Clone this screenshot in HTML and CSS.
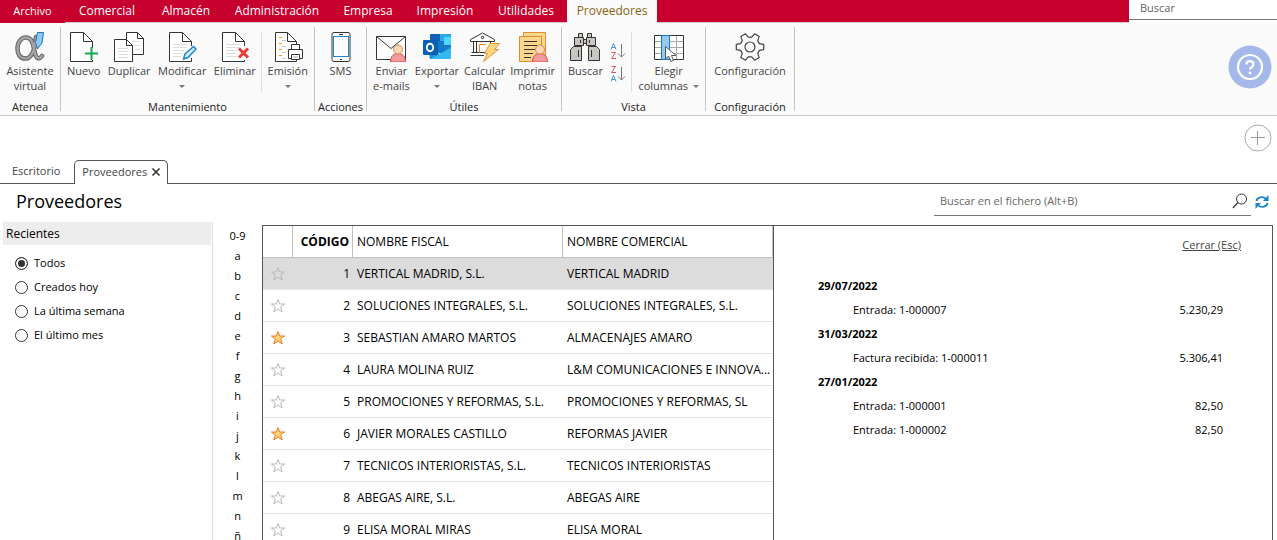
FILE: index.html
```html
<!DOCTYPE html>
<html lang="es">
<head>
<meta charset="utf-8">
<title>Proveedores</title>
<link rel="stylesheet" href="styles.css">
</head>
<body>
<svg class="defs" aria-hidden="true">
  <defs>
    <symbol id="star" viewBox="0 0 16 16"><path d="M8 1.600 9.700 6H14.600L10.700 9 12.200 14 8 11 3.800 14 5.300 9 1.400 6H6.300Z"/></symbol>
    <symbol id="person" viewBox="0 0 16 18"><path d="M.5 18C.5 12 4 9.500 8 9.500S15.500 12 15.500 18Z" fill="#f29b9d" stroke="#e0474c"/><circle cx="8" cy="5.500" r="4.500" fill="#fad7b5" stroke="#d08a50"/></symbol>
  </defs>
</svg>

<header class="menubar">
  <nav class="menu">
    <a class="menu-item file" href="#">Archivo</a>
    <a class="menu-item" href="#">Comercial</a>
    <a class="menu-item" href="#">Almacén</a>
    <a class="menu-item" href="#">Administración</a>
    <a class="menu-item" href="#">Empresa</a>
    <a class="menu-item" href="#">Impresión</a>
    <a class="menu-item" href="#">Utilidades</a>
    <a class="menu-item current" href="#">Proveedores</a>
  </nav>
  <input class="menu-search" type="text" placeholder="Buscar" aria-label="Buscar">
</header>

<section class="ribbon">
  <div class="group">
    <div class="tools single">
      <button class="tool"><svg width="30" height="30" viewBox="0 0 30 30"><g fill="none" stroke-linecap="round"><path d="M21 5C20 16 17 26.500 10.500 26.500 5 26.500 2.500 22 2.500 16.500 2.500 10 6 5.500 11 5.500 18 5.500 18 14 20 21 21 26 24 28 27 24" stroke="#666" stroke-width="4.500"/><path d="M21 5C20 16 17 26.500 10.500 26.500 5 26.500 2.500 22 2.500 16.500 2.500 10 6 5.500 11 5.500 18 5.500 18 14 20 21 21 26 24 28 27 24" stroke="#a3a3a3" stroke-width="2.500"/></g><path d="M22.500.5H28.500L27 11 22.500 17 20.500 10.500Z" fill="#8fc9f2" stroke="#1f74ba"/></svg><span>Asistente<br>virtual</span></button>
    </div>
    <h2 class="group-name">Atenea</h2>
  </div>

  <div class="group">
    <div class="tools">
      <button class="tool"><svg width="30" height="30" viewBox="0 0 30 30"><path d="M23.500 16V9.500L14.500.5H1.500V29.500H23.500V28M14.500.5V9.500H23.500" fill="#fff" stroke="#333"/><path d="M22.500 15V28M16 21.500H29" stroke="#12a650" stroke-width="2"/></svg><span>Nuevo</span></button>
      <button class="tool"><svg width="30" height="30" viewBox="0 0 30 30"><path d="M12.500.5H23.500L29.500 6.500V22.500H12.500Z" fill="#fff" stroke="#333"/><path d="M23.500.5V6.500H29.500" fill="none" stroke="#333"/><path d="M18 9.500H26M20 13.500H26M20 17.500H26" stroke="#ddd"/><path d="M.5 7.500H12.500L18.500 13.500V29.500H.5Z" fill="#fff" stroke="#333"/><path d="M12.500 7.500V13.500H18.500" fill="none" stroke="#333"/><path d="M4 16.500H14M4 19.500H14M4 22.500H14M4 25.500H14" stroke="#ddd"/></svg><span>Duplicar</span></button>
      <button class="tool"><svg width="30" height="30" viewBox="0 0 30 30"><path d="M24.500 14V9.500L15.500.5H2.500V29.500H24.500V26M15.500.5V9.500H24.500" fill="#fff" stroke="#333"/><path d="M6 12.500H20M6 15.500H20M6 18.500H17M6 21.500H15M6 24.500H14" stroke="#ddd"/><path d="M16.500 27 18 22 26.500 14.500 29 17 21 25.500Z" fill="#d3ebfa" stroke="#1e86c8" stroke-width="1.500"/></svg><span>Modificar</span><i class="caret"></i></button>
      <button class="tool"><svg width="30" height="30" viewBox="0 0 30 30"><path d="M24.500 14V9.500L15.500.5H2.500V29.500H24.500V28M15.500.5V9.500H24.500" fill="#fff" stroke="#333"/><path d="M6 12.500H20M6 15.500H20M6 18.500H17M6 21.500H17M6 24.500H17" stroke="#ddd"/><path d="M19 16.500 28 25.500M28 16.500 19 25.500" stroke="#ef3b36" stroke-width="3"/></svg><span>Eliminar</span></button>
      <span class="divider"></span>
      <button class="tool"><svg width="30" height="30" viewBox="0 0 30 30"><path d="M23.500 12V9.500L14.500.5H2.500V29.500H23.500V28M14.500.5V9.500H23.500" fill="#fff" stroke="#333"/><path d="M6 5.500H9M6 11.500H9M6 17.500H9M6 23.500H9" stroke="#f39a12"/><path d="M9 8.500H13M9 14.500H13M9 20.500H13M9 26.500H13" stroke="#ccc"/><path d="M15.500 17.500H29.500V26.500H26.500M18.500 26.500H15.500V17.500M18.500 17.500V12.500H26.500V17.500M18.500 22.500H26.500V27.500H18.500Z" fill="#fff" stroke="#333"/><path d="M20 25H25" stroke="#aaa"/></svg><span>Emisión</span><i class="caret"></i></button>
    </div>
    <h2 class="group-name">Mantenimiento</h2>
  </div>

  <div class="group">
    <div class="tools single">
      <button class="tool"><svg width="20" height="30" viewBox="0 0 20 30"><rect x="1" y=".5" width="18" height="29" rx="2" fill="#fff" stroke="#333"/><rect x="2.500" y="4.500" width="15" height="20" fill="#fff" stroke="#1e86c8"/><path d="M8 2.500H12M9 27.500H11" stroke="#333"/></svg><span>SMS</span></button>
    </div>
    <h2 class="group-name">Acciones</h2>
  </div>

  <div class="group">
    <div class="tools">
      <button class="tool"><svg width="30" height="30" viewBox="0 0 30 30"><path d="M.5 4.500H29.500V27.500H.5ZL15 16.500 29.500 4.500" fill="#fff" stroke="#333"/><use href="#person" x="14" y="12" width="16" height="18"/></svg><span>Enviar<br>e-mails</span></button>
      <button class="tool"><svg width="30" height="30" viewBox="0 0 30 30"><path d="M8 3H29V21H8Z" fill="#1579ca"/><path d="M8 2H18V9H8Z" fill="#0f64b4"/><path d="M18 2H29V9H18Z" fill="#29a8ea"/><path d="M22 5H29V13H22Z" fill="#50d9ff"/><path d="M6 17 18 22 29 14V27H8Z" fill="#1690df"/><path d="M8 27 29 16V27Z" fill="#35b8f1"/><rect x="1" y="8" width="15" height="15" rx="1" fill="#0a5fb5"/><ellipse cx="8" cy="15.500" rx="3.200" ry="3.700" fill="none" stroke="#fff" stroke-width="1.900"/></svg><span>Exportar</span><i class="caret"></i></button>
      <button class="tool"><svg width="30" height="30" viewBox="0 0 30 30"><path d="M.5 7.500 12.500 1 24.500 7.500V9.500H.5ZM3.500 9.500V20.500M6.500 9.500V20.500M20.500 9.500V17M1.500 20.500H15M.5 23.500H14" fill="#fff" stroke="#333"/><path d="M9.500 21V12.500H16" fill="none" stroke="#e98424"/><circle cx="12.500" cy="5.500" r="1.200" fill="none" stroke="#333"/><path d="M20 11.500H29.500L24.500 17.500H28.500L13.500 29.500 17.500 21.500H14.500Z" fill="#ffd77f" stroke="#df9440"/></svg><span>Calcular<br>IBAN</span></button>
      <button class="tool"><svg width="30" height="30" viewBox="0 0 30 30"><path d="M5.500 4V.5H27.500V26H23" fill="#fbd78b" stroke="#dd8d32"/><path d="M1.500 4.500H23.500V29.500H1.500Z" fill="#fbd78b" stroke="#dd8d32"/><path d="M6 9.500H19M6 13.500H19M6 17.500H17M6 21.500H15M6 25.500H13" stroke="#333"/><use href="#person" x="14" y="12" width="16" height="18"/></svg><span>Imprimir<br>notas</span></button>
    </div>
    <h2 class="group-name">Útiles</h2>
  </div>

  <div class="group">
    <div class="tools">
      <button class="tool"><svg width="30" height="30" viewBox="0 0 30 30"><g fill="#c9c5c1" stroke="#333"><path d="M12 7.500H18V11.500H12ZM8.500 1.500H12.500V5.500H8.500ZM17.500 1.500H21.500V5.500H17.500Z"/><path d="M4.500 5.500H13.500V13.500H4.500ZM16.500 5.500H25.500V13.500H16.500ZM3.500 14.500H11.500V28.500H.5V17.500ZM18.500 14.500H26.500L29.500 17.500V28.500H18.500Z"/></g><path d="M10.500 8V11M19.500 8V11M8.500 18V25M21.500 18V25" stroke="#333"/></svg><span>Buscar</span></button>
      <div class="sorts">
        <button class="sort" aria-label="Orden ascendente"><svg width="16" height="16" viewBox="0 0 16 16" fill="none"><path d="M1 6.500 3.500.5 6 6.500M2 4.500H5" stroke="#3a96d2"/><path d="M1.500 9.500H5.500L1.500 15.500H6" stroke="#e0505a"/><path d="M11.500 1V14M8 10.500 11.500 14 15 10.500" stroke="#777"/></svg></button>
        <button class="sort" aria-label="Orden descendente"><svg width="16" height="16" viewBox="0 0 16 16" fill="none"><path d="M1.500.5H5.500L1.500 6.500H6" stroke="#e0505a"/><path d="M1 15.500 3.500 9.500 6 15.500M2 13.500H5" stroke="#3a96d2"/><path d="M11.500 1V14M8 10.500 11.500 14 15 10.500" stroke="#777"/></svg></button>
      </div>
      <span class="divider"></span>
      <button class="tool"><svg width="30" height="30" viewBox="0 0 30 30"><path d="M.5 3.500H29.500V27.500H.5Z" fill="#fff" stroke="#333"/><path d="M1 9.500H29M1 15.500H29M1 21.500H29M22.500 4V27" stroke="#aaa"/><path d="M7.500 3.500H15.500V27.500H7.500Z" fill="#92caf0" stroke="#1877c2"/><path d="M11.500 14.500V27L14.500 24 17 29.500 19.500 28.500 17.500 23.500H22Z" fill="#fff" stroke="#555"/></svg><span>Elegir<br>columnas <i class="caret inline"></i></span></button>
    </div>
    <h2 class="group-name">Vista</h2>
  </div>

  <div class="group">
    <div class="tools single">
      <button class="tool"><svg width="30" height="30" viewBox="0 0 30 30"><path d="M24.400 11.600 28.700 12.300V17.700L24.400 18.400 22.700 21.400 24.200 25.600 19.600 28.200 16.700 24.800H13.300L10.400 28.200 5.800 25.600 7.300 21.400 5.600 18.400 1.300 17.700V12.300L5.600 11.600 7.300 8.600 5.800 4.400 10.400 1.800 13.300 5.200H16.700L19.600 1.800 24.200 4.400 22.700 8.600Z" fill="none" stroke="#444" stroke-width="1.200" stroke-linejoin="round"/><circle cx="15" cy="15" r="5" fill="none" stroke="#444" stroke-width="1.200"/></svg><span>Configuración</span></button>
    </div>
    <h2 class="group-name">Configuración</h2>
  </div>

  <button class="help" aria-label="Ayuda"><svg width="44" height="44" viewBox="0 0 44 44"><circle cx="22" cy="22" r="21.500" fill="#a4b9ea"/><circle cx="22" cy="22" r="12" fill="none" stroke="#fff" stroke-width="2.200"/><path d="M18.500 19.500C18.500 15 25.500 15 25.500 19.500 25.500 22 22 22 22 24.500" fill="none" stroke="#fff" stroke-width="2.200"/><circle cx="22" cy="28" r="1.400" fill="#fff"/></svg></button>
</section>

<div class="quick">
  <button class="add" aria-label="Añadir"><svg width="28" height="28" viewBox="0 0 28 28"><circle cx="14" cy="14" r="13" fill="none" stroke="#aaa"/><path d="M7 13.500H21M13.500 7V21" stroke="#999"/></svg></button>
</div>

<nav class="tabs">
  <a class="tab" href="#">Escritorio</a>
  <div class="tab open"><a href="#">Proveedores</a><button class="close" aria-label="Cerrar pestaña"><svg width="10" height="10" viewBox="0 0 10 10"><path d="M1.500 1.500 8.500 8.500M8.500 1.500 1.500 8.500" stroke="#333" stroke-width="1.600"/></svg></button></div>
</nav>

<div class="heading">
  <h1>Proveedores</h1>
  <div class="find">
    <input type="text" placeholder="Buscar en el fichero (Alt+B)" aria-label="Buscar en el fichero">
    <button aria-label="Buscar"><svg width="16" height="16" viewBox="0 0 16 16"><circle cx="9.500" cy="6" r="5" fill="none" stroke="#333"/><path d="M6 9.500 1 15" stroke="#333" stroke-width="1.200"/></svg></button>
  </div>
  <button class="refresh" aria-label="Actualizar"><svg width="14" height="14" viewBox="0 0 14 14"><path d="M1.500 6C2 2.500 8 .5 11 4M12.500 8C12 11.500 6 13.500 3 10" fill="none" stroke="#1e86c8" stroke-width="1.900"/><path d="M13.500 0V6H8ZM.5 14V8H6Z" fill="#1e86c8"/></svg></button>
</div>

<main class="content">
  <aside class="side">
    <fieldset>
      <legend>Recientes</legend>
      <label><input type="radio" name="recent" checked>Todos</label>
      <label><input type="radio" name="recent">Creados hoy</label>
      <label><input type="radio" name="recent">La última semana</label>
      <label><input type="radio" name="recent">El último mes</label>
    </fieldset>
  </aside>

  <nav class="letters">
    <a href="#">0-9</a><a href="#">a</a><a href="#">b</a><a href="#">c</a><a href="#">d</a><a href="#">e</a><a href="#">f</a><a href="#">g</a><a href="#">h</a><a href="#">i</a><a href="#">j</a><a href="#">k</a><a href="#">l</a><a href="#">m</a><a href="#">n</a><a href="#">ñ</a>
  </nav>

  <div class="file-area">
    <div class="grid">
      <table>
        <colgroup><col class="c-star"><col class="c-code"><col class="c-name"><col class="c-name"></colgroup>
        <thead><tr><th></th><th class="num"><b>CÓDIGO</b></th><th>NOMBRE FISCAL</th><th>NOMBRE COMERCIAL</th></tr></thead>
        <tbody>
          <tr class="selected"><td><svg class="star"><use href="#star"/></svg></td><td class="num">1</td><td>VERTICAL MADRID, S.L.</td><td>VERTICAL MADRID</td></tr>
          <tr><td><svg class="star"><use href="#star"/></svg></td><td class="num">2</td><td>SOLUCIONES INTEGRALES, S.L.</td><td>SOLUCIONES INTEGRALES, S.L.</td></tr>
          <tr><td><svg class="star on"><use href="#star"/></svg></td><td class="num">3</td><td>SEBASTIAN AMARO MARTOS</td><td>ALMACENAJES AMARO</td></tr>
          <tr><td><svg class="star"><use href="#star"/></svg></td><td class="num">4</td><td>LAURA MOLINA RUIZ</td><td>L&amp;M COMUNICACIONES E INNOVA...</td></tr>
          <tr><td><svg class="star"><use href="#star"/></svg></td><td class="num">5</td><td>PROMOCIONES Y REFORMAS, S.L.</td><td>PROMOCIONES Y REFORMAS, SL</td></tr>
          <tr><td><svg class="star on"><use href="#star"/></svg></td><td class="num">6</td><td>JAVIER MORALES CASTILLO</td><td>REFORMAS JAVIER</td></tr>
          <tr><td><svg class="star"><use href="#star"/></svg></td><td class="num">7</td><td>TECNICOS INTERIORISTAS, S.L.</td><td>TECNICOS INTERIORISTAS</td></tr>
          <tr><td><svg class="star"><use href="#star"/></svg></td><td class="num">8</td><td>ABEGAS AIRE, S.L.</td><td>ABEGAS AIRE</td></tr>
          <tr><td><svg class="star"><use href="#star"/></svg></td><td class="num">9</td><td>ELISA MORAL MIRAS</td><td>ELISA MORAL</td></tr>
        </tbody>
      </table>
    </div>
    <section class="detail">
      <a class="dismiss" href="#">Cerrar (Esc)</a>
      <div class="log">
        <h3>29/07/2022</h3>
        <p><span>Entrada: 1-000007</span><span>5.230,29</span></p>
        <h3>31/03/2022</h3>
        <p><span>Factura recibida: 1-000011</span><span>5.306,41</span></p>
        <h3>27/01/2022</h3>
        <p><span>Entrada: 1-000001</span><span>82,50</span></p>
        <p><span>Entrada: 1-000002</span><span>82,50</span></p>
      </div>
    </section>
  </div>
</main>
</body>
</html>
```

FILE: styles.css
```css
* { box-sizing: border-box; }
body {
  margin: 0;
  height: 100vh;
  overflow: hidden;
  display: flex;
  flex-direction: column;
  background: #fff;
  color: #000;
  font: 11px/16px "Open Sans", "Noto Sans", sans-serif;
}
a { color: inherit; text-decoration: none; }
h1, h2, h3, p { margin: 0; font-weight: 400; font-size: inherit; }
button { border: 0; padding: 0; background: none; color: inherit; font: inherit; }
input { font: inherit; }
svg { display: block; }
.defs { position: absolute; width: 0; height: 0; }

/* Menu bar */
.menubar {
  flex: none;
  display: flex;
  justify-content: space-between;
  height: 23px;
  background: #c8002d;
}
.menu {
  flex: 1;
  display: grid;
  grid-template-columns: 65px 84px 74px 108px 74px 80px 82px 90px 1fr;
}
.menu-item {
  color: #fff;
  font-size: 12px;
  line-height: 22px;
  text-align: center;
  border-bottom: 1px solid #d2c6c8;
}
.menu-item.file { font-size: 11px; border-color: #c8002d; }
.menu-item.current { background: #fafafa; color: #8a6410; border-color: #fafafa; }
.menu::after { content: ""; border-bottom: 1px solid #d2c6c8; }
.menu-search {
  width: 148px;
  height: 20px;
  padding: 0 11px 4px;
  border: 0;
  border-bottom: 1px solid #777;
  outline: 0;
  background: #fff;
  box-shadow: 0 3px #fff;
}
::placeholder { color: #666; opacity: 1; }

/* Ribbon */
.ribbon {
  flex: none;
  display: grid;
  grid-template-columns: 61px 254px 52px 195px 144px 89px 1fr;
  padding: 4px 5px 4px 0;
  background: #fafafa;
  border-bottom: 1px solid #c6c6c6;
  color: #444;
}
.group {
  display: flex;
  flex-direction: column;
  justify-content: space-between;
  height: 84px;
  padding-top: 5px;
  border-right: 1px solid #c6c6c6;
}
.tools { display: flex; justify-content: space-between; padding: 0 4px; }
.tools.single { justify-content: center; padding: 0; }
.tool {
  display: flex;
  flex-direction: column;
  align-items: center;
  justify-content: flex-start;
  padding: 0 2px;
  line-height: 15px;
}
.tool span { margin-top: 1px; white-space: nowrap; }
.caret {
  width: 0;
  margin-top: 7px;
  border: 3px solid transparent;
  border-top-color: #777;
  border-bottom: 0;
}
.caret.inline { display: inline-block; margin: 0 0 2px 2px; }
.divider { width: 1px; height: 60px; background: #ddd; }
.group-name { color: #222; line-height: 8px; text-align: center; }
.sorts { display: flex; flex-direction: column; gap: 7px; padding-top: 11px; }
.help { margin-top: 18px; justify-self: end; height: 44px; }

/* Document tabs */
.quick { flex: none; display: flex; justify-content: flex-end; height: 44px; padding: 7px 5px; }
.tabs { flex: none; display: flex; height: 24px; color: #444; }
.tab { padding: 0 14px 0 12px; line-height: 22px; border-bottom: 1px solid #555; }
.tab.open {
  display: flex;
  align-items: center;
  gap: 4px;
  padding: 0 6px 2px 7px;
  border: 1px solid #555;
  border-bottom: 0;
  border-radius: 5px 5px 0 0;
}
.tabs::after { content: ""; flex: 1; border-bottom: 1px solid #555; }

/* Heading */
.heading { flex: none; display: flex; align-items: flex-start; height: 38px; padding: 3px 8px 0 16px; }
h1 { font-size: 18px; line-height: 28px; }
.find { display: flex; align-items: center; width: 317px; height: 29px; margin-left: auto; padding: 0 3px 0 6px; border-bottom: 1px solid #777; }
.find input { flex: 1; border: 0; padding: 0; outline: 0; background: none; }
.refresh { padding: 8px 0 0 4px; }

/* Content */
.content { flex: 1; min-height: 0; display: flex; }
.side { width: 213px; padding-left: 3px; border-right: 1px solid #dcdcdc; }
fieldset { border: 0; margin: 0; padding: 0 1px 0 0; }
legend { width: 100%; padding: 0 3px; margin-bottom: 6px; background: #ededed; font-size: 12px; line-height: 23px; }
.side label { display: flex; align-items: center; gap: 6px; height: 24px; padding-left: 12px; }
.side input {
  appearance: none;
  width: 13px;
  height: 13px;
  margin: 0;
  border: 1px solid #333;
  border-radius: 50%;
  background: #fff;
}
.side input:checked { background: #333; box-shadow: inset 0 0 0 2px #fff; }
.letters { width: 49px; padding-top: 4px; display: flex; flex-direction: column; text-align: center; line-height: 20px; }
.file-area { flex: 1; display: flex; margin: 3px 4px 0 0; border: 1px solid #555; border-bottom: 0; }
.grid { border-right: 1px solid #555; font-size: 12px; }
table { width: 510px; table-layout: fixed; border-collapse: separate; border-spacing: 0; }
.c-star { width: 30px; }
.c-code { width: 60px; }
.c-name { width: 210px; }
th, td { height: 32px; padding: 0 4px; text-align: left; font-weight: 400; white-space: nowrap; overflow: hidden; border-bottom: 1px solid #e6e6e6; }
td:last-child, th:last-child { padding-right: 0; }
th { border-right: 1px solid #c0c0c0; border-bottom-color: #c0c0c0; }
.num { text-align: right; padding: 0 3px; }
.selected td { background: #dcdcdc; }
.star { width: 16px; height: 16px; margin-left: 3px; fill: none; stroke: #b8b8b8; }
.star.on { fill: #ffd27a; stroke: #e07b28; }
.detail { flex: 1; padding: 11px 31px 0 44px; display: flex; flex-direction: column; }
.dismiss { align-self: flex-end; color: #444; text-decoration: underline; }
.log { padding: 21px 18px 0 0; line-height: 24px; }
.log h3 { font-weight: 700; }
.log p { display: flex; justify-content: space-between; padding-left: 35px; }
```
